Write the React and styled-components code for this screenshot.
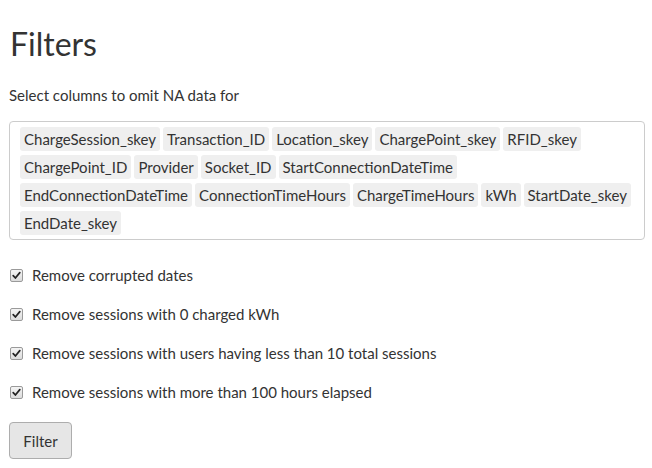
import React from "react";
import styled, { createGlobalStyle } from "styled-components";

const Global = createGlobalStyle`
  html, body { margin: 0; padding: 0; background: #fff; }
  body { font-family: Lato, "Liberation Sans", sans-serif; color: #333; }
`;

const Page = styled.div`
  padding: 22px 8px 10px 9px;
  width: 636px;
`;

const Title = styled.h1`
  margin: 0 0 0 1px;
  font-size: 32px;
  font-weight: 400;
  line-height: 44px;
  color: #333;
`;

const Label = styled.div`
  margin-top: 19px;
  font-size: 15px;
  line-height: 20px;
`;

const TagBox = styled.div`
  margin-top: 16px;
  border: 1px solid #ccc;
  border-radius: 4px;
  padding: 5px 13px 4px 10px;
  display: flex;
  flex-wrap: wrap;
  gap: 4px 3px;
`;

const Tag = styled.span`
  background: #efefef;
  border-radius: 3px;
  padding: 0 4px;
  height: 24px;
  line-height: 24px;
  font-size: 15px;
  color: #333;
`;

const Checks = styled.div`
  margin-top: 25px;
  display: flex;
  flex-direction: column;
  gap: 19px;
`;

const CheckRow = styled.label`
  display: flex;
  align-items: center;
  gap: 9px;
  height: 20px;
  font-size: 15px;
`;

const Box = styled.span`
  margin-left: 1px;
  width: 11px;
  height: 11px;
  border: 1px solid #9a9a9a;
  border-radius: 2px;
  background: linear-gradient(#f4f4f4, #dcdcdc);
  display: flex;
  align-items: center;
  justify-content: center;
  flex: none;
`;

const Button = styled.button`
  margin-top: 20px;
  font-family: inherit;
  font-size: 15px;
  color: #333;
  background: #e6e6e6;
  border: 1px solid #adadad;
  border-radius: 4px;
  width: 63px;
  height: 37px;
  padding: 0;
`;

const tags = [
  "ChargeSession_skey","Transaction_ID","Location_skey","ChargePoint_skey","RFID_skey",
  "ChargePoint_ID","Provider","Socket_ID","StartConnectionDateTime",
  "EndConnectionDateTime","ConnectionTimeHours","ChargeTimeHours","kWh","StartDate_skey",
  "EndDate_skey",
];

const checks = [
  "Remove corrupted dates",
  "Remove sessions with 0 charged kWh",
  "Remove sessions with users having less than 10 total sessions",
  "Remove sessions with more than 100 hours elapsed",
];

function Check() {
  return (
    <Box>
      <svg width="9" height="9" viewBox="0 0 9 9">
        <path d="M1.2 4.6 L3.4 7 L7.8 1.6" fill="none" stroke="#222" strokeWidth="1.7" strokeLinecap="round" strokeLinejoin="round" />
      </svg>
    </Box>
  );
}

export default function App() {
  return (
    <Page>
      <Global />
      <Title>Filters</Title>
      <Label>Select columns to omit NA data for</Label>
      <TagBox>
        {tags.map((t) => <Tag key={t}>{t}</Tag>)}
      </TagBox>
      <Checks>
        {checks.map((c) => (
          <CheckRow key={c}>
            <Check />
            {c}
          </CheckRow>
        ))}
      </Checks>
      <Button>Filter</Button>
    </Page>
  );
}
